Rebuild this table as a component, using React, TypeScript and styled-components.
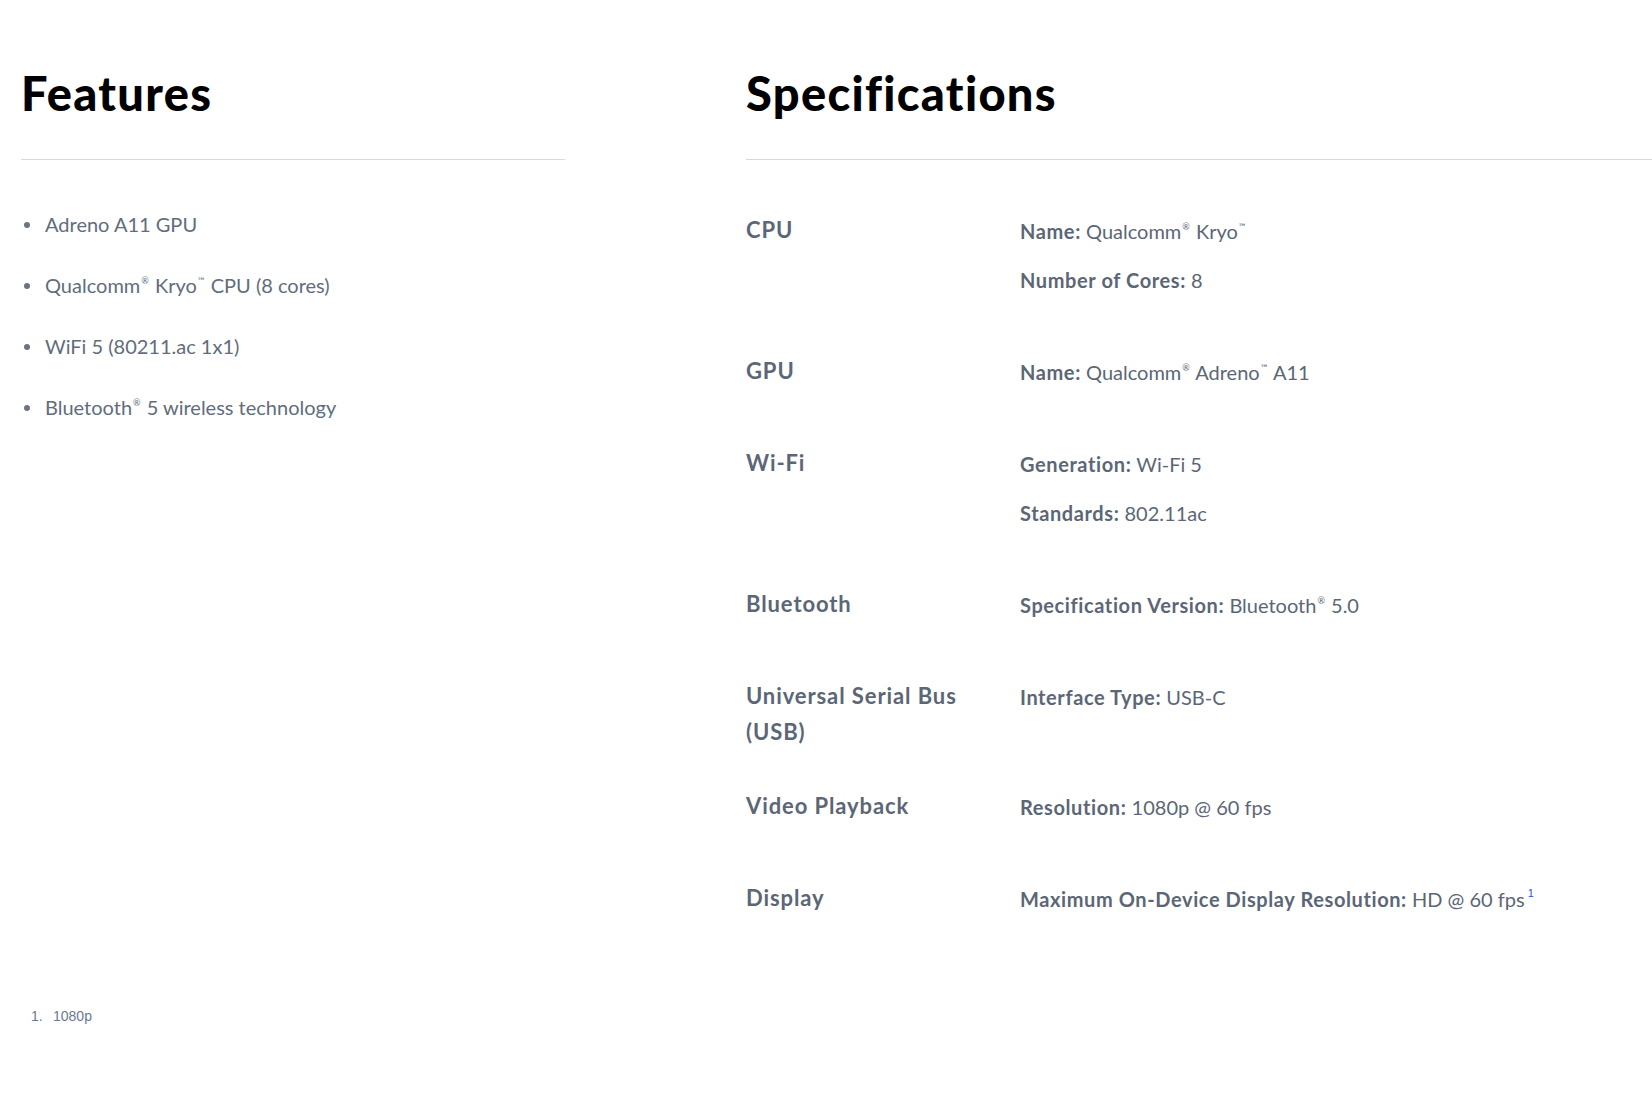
import React from 'react';
import styled, { createGlobalStyle } from 'styled-components';

const GlobalStyle = createGlobalStyle`
    html, body {
        margin: 0;
        padding: 0;
        background: #ffffff;
    }
    body {
        font-family: Lato, "Noto Sans", sans-serif;
        overflow: hidden;
    }
`

type SpecValue = { key: string; value: React.ReactNode }
type Spec = { label: string; values: SpecValue[] }

export default function App() {
    return (
        <Page>
            <GlobalStyle />
            <Columns>
                <FeaturesCol>
                    <Title>Features</Title>
                    <Rule />
                    <FeatureList>
                        {features.map((f, i) => (
                            <FeatureItem key={i}>{f}</FeatureItem>
                        ))}
                    </FeatureList>
                </FeaturesCol>
                <SpecsCol>
                    <Title>Specifications</Title>
                    <Rule />
                    <SpecTable>
                        {specs.map((s) => (
                            <SpecRow key={s.label}>
                                <SpecLabel>{s.label}</SpecLabel>
                                <SpecValues>
                                    {s.values.map((v) => (
                                        <SpecLine key={v.key}>
                                            <SpecKey>{v.key}</SpecKey> {v.value}
                                        </SpecLine>
                                    ))}
                                </SpecValues>
                            </SpecRow>
                        ))}
                    </SpecTable>
                </SpecsCol>
            </Columns>
            <Footnotes>
                <FootItem>1080p</FootItem>
            </Footnotes>
        </Page>
    )
}

const Page = styled.div`
    width: 100vw;
    min-height: 100vh;
    box-sizing: border-box;
    padding: 65px 0 0 21px;
`

const Columns = styled.div`
    display: flex;
    align-items: flex-start;
`

const FeaturesCol = styled.section`
    flex: 0 0 544px;
    margin-right: 181px;
`

const SpecsCol = styled.section`
    flex: 1;
`

const Title = styled.h2`
    margin: 0 0 38px;
    font-family: Lato, sans-serif;
    font-size: 47px;
    line-height: 56px;
    font-weight: 900;
    color: #000000;
    letter-spacing: 1.3px;
`

const Rule = styled.hr`
    margin: 0;
    border: 0;
    border-top: 1px solid #d9d9d9;
`

const FeatureList = styled.ul`
    list-style: none;
    margin: 49px 0 0;
    padding: 0;
`

const FeatureItem = styled.li`
    position: relative;
    padding-left: 24px;
    margin-bottom: 31px;
    font-size: 20px;
    line-height: 30px;
    color: #626c7b;

    &::before {
        content: '';
        position: absolute;
        left: 3px;
        top: 13px;
        width: 6px;
        height: 6px;
        border-radius: 50%;
        background: #6b7482;
    }
`

const Mark = styled.sup`
    font-size: 0.45em;
    line-height: 0;
    vertical-align: 0.95em;
    margin: 0 1px;
`

const FootRef = styled.sup`
    font-family: "Liberation Sans", Arial, sans-serif;
    font-size: 11px;
    line-height: 0;
    vertical-align: 10px;
    margin-left: 3px;
    color: #3253dc;
`

const SpecTable = styled.div`
    margin-top: 52px;
`

const SpecRow = styled.div`
    display: flex;
    align-items: flex-start;
    margin-bottom: 38px;
`

const SpecLabel = styled.div`
    flex: 0 0 274px;
    box-sizing: border-box;
    padding-right: 30px;
    font-size: 22px;
    line-height: 36px;
    font-weight: 700;
    letter-spacing: 0.9px;
    color: #5c6676;
`

const SpecValues = styled.div`
    padding-top: 5px;
`

const SpecLine = styled.p`
    margin: 0 0 21px;
    font-size: 20px;
    line-height: 28px;
    color: #5c6676;
`

const SpecKey = styled.span`
    font-weight: 700;
    letter-spacing: 0.6px;
`

const Footnotes = styled.ol`
    list-style: none;
    margin: 36px 0 0 10px;
    padding: 0;
    font-family: "Liberation Sans", Arial, sans-serif;
    font-size: 14px;
    color: #6a7893;
    counter-reset: note;
`

const FootItem = styled.li`
    counter-increment: note;
    display: flex;

    &::before {
        content: counter(note) '.';
        flex: 0 0 22px;
    }
`

const features: React.ReactNode[] = [
    'Adreno A11 GPU',
    <>Qualcomm<Mark>®</Mark> Kryo<Mark>™</Mark> CPU (8 cores)</>,
    'WiFi 5 (80211.ac 1x1)',
    <>Bluetooth<Mark>®</Mark> 5 wireless technology</>,
]

const specs: Spec[] = [
    {
        label: 'CPU',
        values: [
            { key: 'Name:', value: <>Qualcomm<Mark>®</Mark> Kryo<Mark>™</Mark></> },
            { key: 'Number of Cores:', value: '8' },
        ],
    },
    {
        label: 'GPU',
        values: [{ key: 'Name:', value: <>Qualcomm<Mark>®</Mark> Adreno<Mark>™</Mark> A11</> }],
    },
    {
        label: 'Wi-Fi',
        values: [
            { key: 'Generation:', value: 'Wi-Fi 5' },
            { key: 'Standards:', value: '802.11ac' },
        ],
    },
    {
        label: 'Bluetooth',
        values: [{ key: 'Specification Version:', value: <>Bluetooth<Mark>®</Mark> 5.0</> }],
    },
    {
        label: 'Universal Serial Bus (USB)',
        values: [{ key: 'Interface Type:', value: 'USB-C' }],
    },
    {
        label: 'Video Playback',
        values: [{ key: 'Resolution:', value: '1080p @ 60 fps' }],
    },
    {
        label: 'Display',
        values: [{ key: 'Maximum On-Device Display Resolution:', value: <>HD @ 60 fps<FootRef>1</FootRef></> }],
    },
]
